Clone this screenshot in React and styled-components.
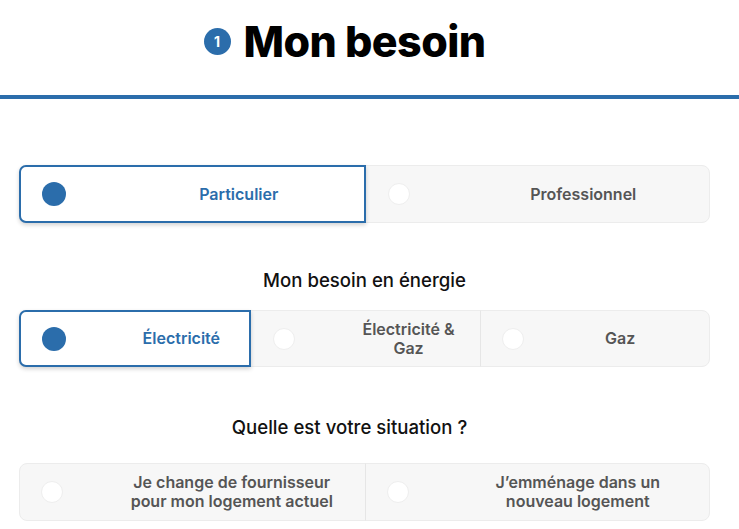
import React, { useState } from 'react';
import styled, { createGlobalStyle } from 'styled-components';

const GlobalStyle = createGlobalStyle`
  body {
    margin: 0;
    background: #ffffff;
    font-family: Inter, "Noto Sans", sans-serif;
    color: #111;
  }
`;

const BLUE = '#2b6dab';

const Header = styled.header`
  height: 95px;
  border-bottom: 4px solid ${BLUE};
  display: flex;
  justify-content: center;
  align-items: flex-start;
  padding-right: 50px;
`;

const TitleRow = styled.div`
  display: flex;
  align-items: center;
  gap: 13px;
  margin-top: 18px;
`;

const StepBadge = styled.span`
  width: 27px;
  height: 27px;
  border-radius: 50%;
  background: ${BLUE};
  color: #fff;
  font-size: 14px;
  font-weight: 700;
  display: flex;
  align-items: center;
  justify-content: center;
`;

const Title = styled.h1`
  margin: 0;
  font-size: 43px;
  line-height: 46px;
  font-weight: 800;
  letter-spacing: -0.6px;
  color: #000;
`;

const Main = styled.main`
  padding: 66px 29px 0 19px;
`;

const Question = styled.h2`
  margin: ${p => p.$top}px 0 ${p => p.$bottom}px;
  padding-right: ${p => p.$shift || 0}px;
  text-align: center;
  font-size: 18.6px;
  line-height: 20px;
  font-weight: 500;
  color: #111;
`;

const Group = styled.div`
  display: flex;
  height: ${p => p.$h}px;
  background: #f7f7f7;
  border: 1px solid #ececec;
  border-radius: 8px;
  box-sizing: border-box;
`;

const Option = styled.button`
  flex: 1 1 0;
  min-width: 0;
  position: relative;
  display: flex;
  align-items: center;
  margin: -1px 0;
  padding: 0;
  font-family: inherit;
  background: ${p => (p.$active ? '#fff' : 'transparent')};
  border: ${p => (p.$active ? `2px solid ${BLUE}` : '1px solid transparent')};
  border-left-color: ${p => (p.$active ? BLUE : p.$divider ? '#e6e6e6' : 'transparent')};
  border-radius: ${p => (p.$first ? '7px 0 0 7px' : p.$last ? '0 7px 7px 0' : '0')};
  box-shadow: ${p => (p.$active ? '0 2px 4px rgba(0,0,0,0.18)' : 'none')};
  z-index: ${p => (p.$active ? 1 : 0)};
  cursor: pointer;
  &:first-child { margin-left: -1px; }
  &:last-child { margin-right: -1px; }
`;

const Radio = styled.span`
  position: absolute;
  left: 21px;
  top: 50%;
  transform: translateY(-50%);
  width: ${p => (p.$active ? 24 : 22)}px;
  height: ${p => (p.$active ? 24 : 22)}px;
  border-radius: 50%;
  box-sizing: border-box;
  background: ${p => (p.$active ? BLUE : '#fff')};
  border: ${p => (p.$active ? 'none' : '1px solid #eeeeee')};
`;

const Label = styled.span`
  flex: 1;
  margin: 0 ${p => p.$pad[1]}px 0 ${p => p.$pad[0]}px;
  text-align: center;
  font-size: 16px;
  line-height: 19px;
  font-weight: 600;
  color: ${p => (p.$active ? BLUE : '#555')};
`;

const Choice = ({ options, value, onChange, height, pads }) => (
  <Group $h={height}>
    {options.map((opt, i) => {
      const active = value === i;
      return (
        <Option
          key={i}
          type="button"
          $active={active}
          $first={i === 0}
          $last={i === options.length - 1}
          $divider={i > 0 && value !== i - 1}
          onClick={() => onChange(i)}
        >
          <Radio $active={active} />
          <Label $active={active} $pad={pads[i]}>{opt}</Label>
        </Option>
      );
    })}
  </Group>
);

export default function App() {
  const [client, setClient] = useState(0);
  const [energy, setEnergy] = useState(0);
  const [situation, setSituation] = useState(-1);

  return (
    <>
      <GlobalStyle />
      <Header>
        <TitleRow>
          <StepBadge>1</StepBadge>
          <Title>Mon besoin</Title>
        </TitleRow>
      </Header>
      <Main>
        <Choice
          options={['Particulier', 'Professionnel']}
          value={client}
          onChange={setClient}
          height={58}
          pads={[[101, 8], [99, 8]]}
        />
        <Question $top={47} $bottom={20}>Mon besoin en énergie</Question>
        <Choice
          options={['Électricité', 'Électricité & Gaz', 'Gaz']}
          value={energy}
          onChange={setEnergy}
          height={57}
          pads={[[101, 8], [98, 12], [80, 30]]}
        />
        <Question $top={50} $bottom={26} $shift={30}>Quelle est votre situation ?</Question>
        <Choice
          options={['Je change de fournisseur pour mon logement actuel', 'J’emménage dans un nouveau logement']}
          value={situation}
          onChange={setSituation}
          height={58}
          pads={[[103, 23], [103, 22]]}
        />
      </Main>
    </>
  );
}
